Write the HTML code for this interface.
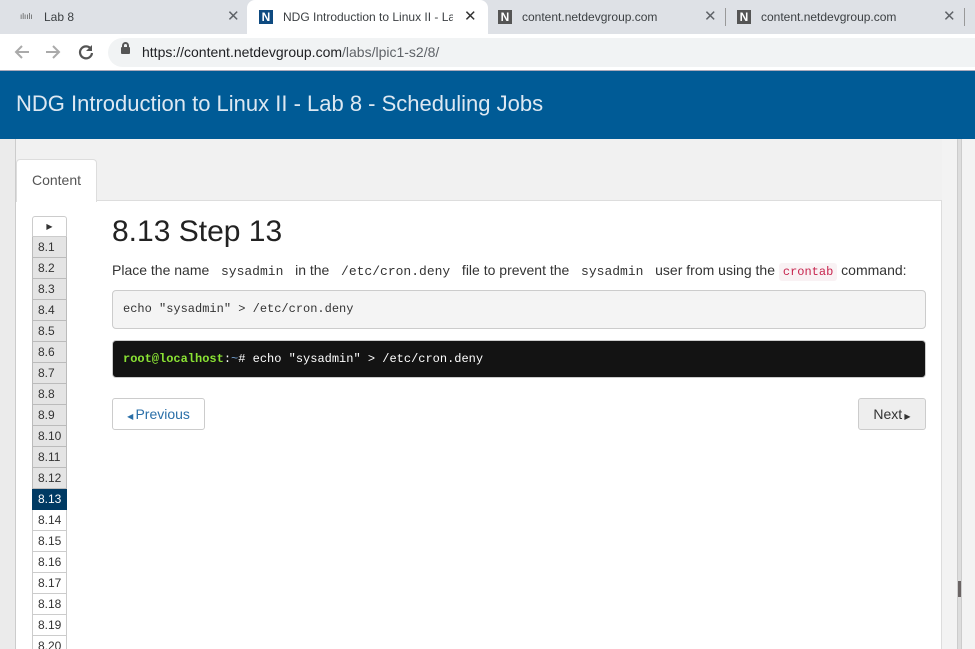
<!DOCTYPE html>
<html><head><meta charset="utf-8"><style>
*{box-sizing:border-box;margin:0;padding:0}
html{width:975px;height:649px;overflow:hidden}
body{width:975px;height:649px;overflow:hidden;position:relative;background:#f1f1f1;font-family:"Liberation Sans",sans-serif;color:#333}
.a{position:absolute}
.mono{font-family:"Liberation Mono",monospace}
.tab{position:absolute;top:0;height:34px;font-size:12px;color:#3c4043;line-height:34px}
.x{position:absolute;font-size:15px;color:#5f6368;top:0}
.fav{position:absolute;top:10px;width:14px;height:14px;color:#fff;font-weight:bold;font-size:12px;line-height:14px;text-align:center}
.nav div{height:21px;border:1px solid #bbb;border-top:none;font-size:12px;line-height:20px;padding-left:5px;background:#e4e4e4;color:#333}
.nav div.w{background:#fff;border-color:#ccc}
.nav div.on{background:#003a63;color:#fff;border-color:#003a63}
.btn{position:absolute;height:32px;border:1px solid #ccc;border-radius:3px;font-size:14px;line-height:30px;text-align:center}
</style></head><body>
<div class="a" style="left:0;top:0;width:975px;height:34px;background:#dee1e6"></div>
<div class="tab" style="left:20px;width:220px"><span style="font-size:8px;color:#555;position:absolute;left:0;top:0">ılıılı</span><span style="position:absolute;left:24px">Lab 8</span></div>
<div class="x" style="left:227px;line-height:34px">✕</div>
<div class="a" style="left:247px;top:0;width:241px;height:34px;background:#fff;border-radius:8px 8px 0 0"></div>
<div class="fav" style="left:259px;background:#0e4a80">N</div>
<div class="tab" style="left:283px;width:170px;overflow:hidden;white-space:nowrap">NDG Introduction to Linux II - Lab</div>
<div class="x" style="left:464px;line-height:34px;color:#333">✕</div>
<div class="fav" style="left:498px;background:#555">N</div>
<div class="tab" style="left:522px">content.netdevgroup.com</div>
<div class="x" style="left:704px;line-height:34px">✕</div>
<div class="a" style="left:725px;top:8px;width:1px;height:18px;background:#999"></div>
<div class="fav" style="left:737px;background:#555">N</div>
<div class="tab" style="left:761px">content.netdevgroup.com</div>
<div class="x" style="left:943px;line-height:34px">✕</div>
<div class="a" style="left:964px;top:8px;width:1px;height:18px;background:#999"></div>
<div class="a" style="left:0;top:34px;width:975px;height:36px;background:#fff"></div>
<svg class="a" style="left:12px;top:43px" width="20" height="18" viewBox="0 0 20 18"><path d="M17 9H4M10 3L4 9l6 6" stroke="#aaa" stroke-width="2" fill="none"/></svg>
<svg class="a" style="left:43px;top:43px" width="20" height="18" viewBox="0 0 20 18"><path d="M3 9h13M10 3l6 6-6 6" stroke="#aaa" stroke-width="2" fill="none"/></svg>
<svg class="a" style="left:77px;top:43px" width="18" height="18" viewBox="0 0 18 18"><path d="M14 6A6 6 0 1 0 15 10" stroke="#555" stroke-width="2.2" fill="none"/><path d="M15 2v6h-6z" fill="#555"/></svg>
<div class="a" style="left:108px;top:38px;width:867px;height:29px;background:#f1f3f4;border-radius:15px 0 0 15px"></div>
<div class="a" style="left:121px;top:47px;width:9px;height:7px;background:#555;border-radius:1px"></div>
<div class="a" style="left:122px;top:42px;width:7px;height:7px;border:2px solid #555;border-radius:4px 4px 0 0"></div>
<div class="a" style="left:142px;top:44px;font-size:14px;color:#202124">https://content.netdevgroup.com<span style="color:#5f6368">/labs/lpic1-s2/8/</span></div>
<div class="a" style="left:0;top:70px;width:975px;height:69px;background:#005b96;border-top:1px solid #aab"></div>
<div class="a" style="left:16px;top:91px;font-size:22px;color:#dde8f2">NDG Introduction to Linux II - Lab 8 - Scheduling Jobs</div>
<div class="a" style="left:0;top:139px;width:16px;height:510px;background:#ebebeb;border-right:1px solid #ccc"></div>
<div class="a" style="left:16px;top:200px;width:926px;height:449px;background:#fff;border-top:1px solid #ddd;border-right:1px solid #ddd"></div>
<div class="a" style="left:16px;top:159px;width:81px;height:43px;background:#fff;border:1px solid #ddd;border-bottom:none;border-radius:4px 4px 0 0;font-size:14px;line-height:40px;text-align:center;color:#555">Content</div>
<div class="a" style="left:942px;top:139px;width:33px;height:510px;background:#f3f3f3"></div>
<div class="a" style="left:957px;top:139px;width:5px;height:510px;background:#ddd;border-left:1px solid #ccc;border-right:1px solid #ccc"></div>
<div class="a" style="left:958px;top:581px;width:3px;height:16px;background:#6b6565"></div>
<div class="a nav" style="left:32px;top:216px;width:35px;height:433px;overflow:hidden">
<div class="w" style="border-top:1px solid #ccc;border-radius:3px 3px 0 0;font-size:8px;padding:0;text-align:center">▶</div>
<div>8.1</div><div>8.2</div><div>8.3</div><div>8.4</div><div>8.5</div><div>8.6</div><div>8.7</div><div>8.8</div><div>8.9</div><div>8.10</div><div>8.11</div><div>8.12</div>
<div class="on">8.13</div>
<div class="w">8.14</div><div class="w">8.15</div><div class="w">8.16</div><div class="w">8.17</div><div class="w">8.18</div><div class="w">8.19</div><div class="w">8.20</div>
</div>
<div class="a" style="left:112px;top:215px;font-size:30px;color:#222">8.13 Step 13</div>
<div class="a" style="left:112px;top:262px;font-size:14px;white-space:nowrap">Place the name <span class="mono" style="font-size:13px">&nbsp;sysadmin&nbsp;</span> in the <span class="mono" style="font-size:13px">&nbsp;/etc/cron.deny&nbsp;</span> file to prevent the <span class="mono" style="font-size:13px">&nbsp;sysadmin&nbsp;</span> user from using the <span class="mono" style="font-size:12px;color:#c7254e;background:#f9f2f4;padding:2px 4px;border-radius:3px">crontab</span> command:</div>
<div class="a mono" style="left:112px;top:290px;width:814px;height:39px;background:#f4f4f4;border:1px solid #ccc;border-radius:4px;font-size:12px;line-height:37px;padding-left:10px">echo "sysadmin" &gt; /etc/cron.deny</div>
<div class="a mono" style="left:112px;top:340px;width:814px;height:38px;background:#131313;border:1px solid #ccc;border-radius:4px;font-size:12px;line-height:36px;padding-left:10px;color:#fff"><b style="color:#8ae234">root@localhost</b>:<span style="color:#729fcf">~</span># echo "sysadmin" &gt; /etc/cron.deny</div>
<div class="btn" style="left:112px;top:398px;width:93px;background:#fff;color:#2a6fa8"><span style="font-size:8px">◀ </span>Previous</div>
<div class="btn" style="left:858px;top:398px;width:68px;background:#eee;color:#333">Next<span style="font-size:8px"> ▶</span></div>
</body></html>
